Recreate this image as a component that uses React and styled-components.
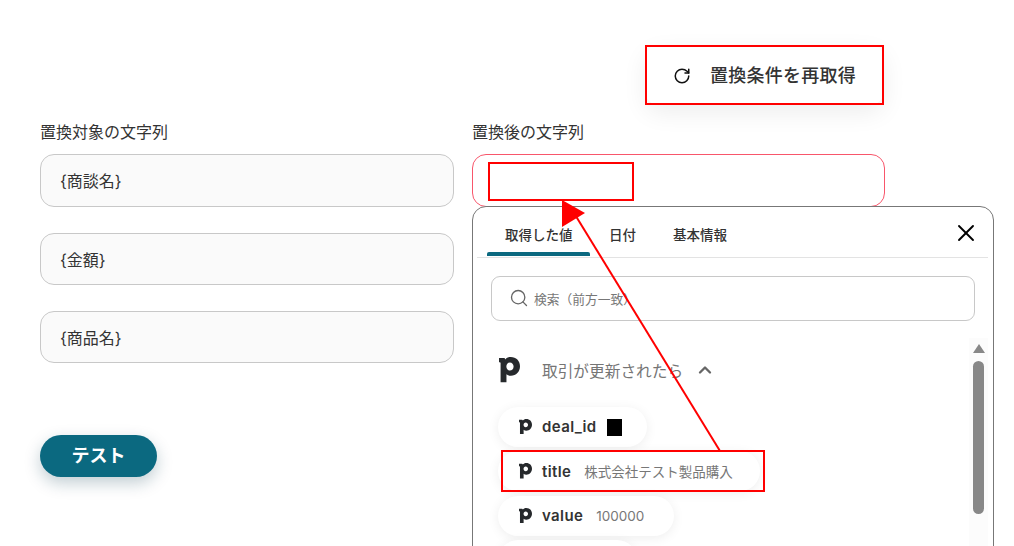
import React from "react"
import styled, { createGlobalStyle } from "styled-components"
import { Search, X, ChevronUp, RotateCw } from "lucide-react"

const GlobalStyle = createGlobalStyle`
  html, body {
    margin: 0;
    height: 100%;
    overflow: hidden;
    background: #fff;
    font-family: Inter, "Noto Sans CJK JP", sans-serif;
    color: #333;
  }
`

const Page = styled.div`
  position: relative;
  width: 1014px;
  height: 546px;
  overflow: hidden;
  padding: 45px 0 0 40px;
  box-sizing: border-box;
`

const Toolbar = styled.div`
  display: flex;
  justify-content: flex-end;
  width: 844px;
  height: 60px;
  margin-bottom: 17px;
`

const RefreshButton = styled.button`
  position: relative;
  width: 239px;
  height: 60px;
  box-sizing: border-box;
  display: flex;
  align-items: center;
  gap: 19px;
  padding: 0 0 2px 28px;
  border: 0;
  border-radius: 14px;
  background: #fff;
  box-shadow: 0 8px 24px rgba(0, 0, 0, 0.07);
  font: inherit;
  font-size: 18px;
  font-weight: 500;
  letter-spacing: 0.25px;
  color: #333;
  &::after {
    content: "";
    position: absolute;
    inset: 0;
    border: 2px solid #f00;
  }
`

const RefreshIcon = styled(RotateCw)`
  margin-top: 3px;
`

const Columns = styled.div`
  display: flex;
  align-items: flex-start;
  gap: 18px;
`

const Column = styled.div`
  width: ${props => props.$width}px;
  display: flex;
  flex-direction: column;
`

const Label = styled.div`
  height: 20px;
  line-height: 20px;
  margin-bottom: 12px;
  font-size: 16px;
  color: #333;
`

const Field = styled.div`
  box-sizing: border-box;
  height: ${props => props.$height || 52}px;
  margin-bottom: 26px;
  display: flex;
  align-items: center;
  padding: 0 19px 1px;
  border: 1px solid #c8c8c8;
  border-radius: 14px;
  background: #fafafa;
  font-size: 16px;
  color: #333;
`

const ActiveField = styled.div`
  box-sizing: border-box;
  height: 53px;
  display: flex;
  align-items: center;
  padding: 1px 15px 0;
  border: 1px solid #f8566b;
  border-radius: 14px;
  background: #fff;
`

const InnerMark = styled.div`
  width: 146px;
  height: 39px;
  box-sizing: border-box;
  border: 2px solid #f00;
`

const TestButton = styled.button`
  align-self: flex-start;
  width: 117px;
  height: 42px;
  margin-top: 46px;
  padding: 0 0 4px;
  border: 0;
  border-radius: 21px;
  background: #0b6980;
  box-shadow: 0 6px 16px rgba(11, 60, 80, 0.25);
  font: inherit;
  font-size: 18px;
  font-weight: 700;
  color: #fff;
`

const Panel = styled.div`
  position: absolute;
  left: 472px;
  top: 206px;
  width: 522px;
  height: 360px;
  box-sizing: border-box;
  border: 1px solid #777;
  border-radius: 14px;
  background: #fff;
  padding: 0 5px 0 4px;
`

const TabBar = styled.div`
  height: 50px;
  display: flex;
  align-items: stretch;
  gap: 19px;
  padding-left: 10px;
  border-bottom: 1px solid #e3e3e3;
`

const Tab = styled.div`
  position: relative;
  display: flex;
  align-items: center;
  padding: 4px ${props => (props.$tight ? 0 : 18)}px 0;
  width: ${props => (props.$active ? "103px" : "auto")};
  box-sizing: border-box;
  margin-left: ${props => (props.$shift ? -1 : 0)}px;
  font-size: 13.5px;
  font-weight: 500;
  white-space: nowrap;
  color: #333;
  &::after {
    content: "";
    display: ${props => (props.$active ? "block" : "none")};
    position: absolute;
    left: 0;
    right: 0;
    bottom: 1px;
    height: 4px;
    border-radius: 2px 2px 0 0;
    background: #0b6980;
  }
`

const CloseButton = styled.button`
  margin-left: auto;
  margin-right: 8px;
  padding: 2px 0 0;
  border: 0;
  background: none;
  color: #000;
  display: flex;
  align-items: center;
`

const SearchBox = styled.div`
  box-sizing: border-box;
  height: 45px;
  margin: 18px 13px 0 14px;
  display: flex;
  align-items: center;
  gap: 5px;
  padding: 0 0 1px 17px;
  border: 1px solid #c8c8c8;
  border-radius: 9px;
  font-size: 12.75px;
  color: #777;
  svg { color: #666; }
`

const Body = styled.div`
  position: relative;
  padding: 27px 0 0 22px;
`

const SectionHead = styled.div`
  display: flex;
  align-items: center;
  height: 44px;
  margin-bottom: 14.5px;
  font-size: 15.7px;
  color: #757575;
`

const SectionTitle = styled.span`
  margin: 0 12px 0 22px;
`

const ChipList = styled.div`
  display: flex;
  flex-direction: column;
  align-items: flex-start;
  gap: 4.5px;
  margin-left: -1px;
`

const Chip = styled.div`
  position: relative;
  box-sizing: border-box;
  height: 40px;
  flex: none;
  width: ${props => props.$width}px;
  display: flex;
  align-items: center;
  padding-left: 21px;
  border-radius: 20px;
  background: #fff;
  box-shadow: 0 2px 12px rgba(0, 0, 0, 0.07);
  font-size: 15px;
  font-weight: 600;
  letter-spacing: 0.4px;
  color: #333;
`

const ChipName = styled.span`
  margin-left: 10px;
`

const ChipValue = styled.span`
  margin-left: 13px;
  font-size: 13.5px;
  font-weight: 400;
  letter-spacing: 0;
  color: #777;
`

const Redacted = styled.span`
  width: 15px;
  height: 17px;
  margin: 2px 0 0 10px;
  background: #000;
`

const ChipMark = styled.div`
  position: absolute;
  left: 3px;
  top: -1px;
  width: 264px;
  height: 42px;
  box-sizing: border-box;
  border: 2px solid #f00;
`

const Scrollbar = styled.div`
  position: absolute;
  left: 492px;
  top: 17px;
  width: 19px;
  height: 230px;
  background: #fcfcfc;
  display: flex;
  flex-direction: column;
  align-items: center;
`

const ScrollArrow = styled.div`
  width: 0;
  height: 0;
  margin-top: 6px;
  border-left: 6px solid transparent;
  border-right: 6px solid transparent;
  border-bottom: 9px solid #888;
`

const ScrollThumb = styled.div`
  width: 11px;
  height: 153px;
  margin-top: 8px;
  border-radius: 6px;
  background: #888;
`

const ArrowOverlay = styled.svg`
  position: absolute;
  left: 0;
  top: 0;
  pointer-events: none;
`

// pipedrive "p" mark
const PipedriveIcon = ({ size = 14, color = "#26292c" }) => (
  <svg width={size} height={size * 1.2} viewBox="0 0 20 24" fill={color}>
    <path
      fillRule="evenodd"
      d="M0 1h4.600c.7 0 1.100.5 1.300 1.300C7 .9 8.800 0 11.200 0 16.300 0 20 3.700 20 8.900c0 5.300-3.800 9-8.600 9-1.900 0-3.300-.6-4.300-1.500V24H1.500V5.800C1.500 5.200 1.200 4.900.7 4.900H0V1Zm10.300 4.200c-2 0-3.300 1.600-3.300 3.800 0 2.100 1.300 3.800 3.300 3.800 2 0 3.600-1.500 3.600-3.800 0-2.200-1.500-3.800-3.600-3.800Z"
    />
  </svg>
)

const chips = [
  { id: 1, name: "deal_id", width: 149, redacted: true },
  { id: 2, name: "title", value: "株式会社テスト製品購入", width: 262, marked: true },
  { id: 3, name: "value", value: "100000", width: 176 },
  { id: 4, width: 139 },
]

const App = () => (
  <Page>
    <GlobalStyle />
    <Toolbar>
      <RefreshButton>
        <RefreshIcon size={18} strokeWidth={2} color="#111" />
        置換条件を再取得
      </RefreshButton>
    </Toolbar>
    <Columns>
      <Column $width={414}>
        <Label>置換対象の文字列</Label>
        <Field $height={53}>{"{商談名}"}</Field>
        <Field>{"{金額}"}</Field>
        <Field>{"{商品名}"}</Field>
        <TestButton>テスト</TestButton>
      </Column>
      <Column $width={413}>
        <Label>置換後の文字列</Label>
        <ActiveField>
          <InnerMark />
        </ActiveField>
      </Column>
    </Columns>
    <Panel>
      <TabBar>
        <Tab $active>取得した値</Tab>
        <Tab $tight>日付</Tab>
        <Tab>基本情報</Tab>
        <CloseButton>
          <X size={28} strokeWidth={1.6} />
        </CloseButton>
      </TabBar>
      <SearchBox>
        <Search size={20} strokeWidth={1.6} />
        検索（前方一致）
      </SearchBox>
      <Body>
        <SectionHead>
          <PipedriveIcon size={21} />
          <SectionTitle>取引が更新されたら</SectionTitle>
          <ChevronUp size={20} strokeWidth={2.8} color="#666" />
        </SectionHead>
        <ChipList>
          {chips.map(chip => (
            <Chip key={chip.id} $width={chip.width}>
              {chip.name && <PipedriveIcon size={13} />}
              {chip.name && <ChipName>{chip.name}</ChipName>}
              {chip.redacted && <Redacted />}
              {chip.value && <ChipValue>{chip.value}</ChipValue>}
              {chip.marked && <ChipMark />}
            </Chip>
          ))}
        </ChipList>
        <Scrollbar>
          <ScrollArrow />
          <ScrollThumb />
        </Scrollbar>
      </Body>
    </Panel>
    <ArrowOverlay width="1014" height="546">
      <line x1="720" y1="451" x2="574" y2="213" stroke="#f00" strokeWidth="2" />
      <polygon points="562,200 562,227 585,213" fill="#f00" />
    </ArrowOverlay>
  </Page>
)

export default App
